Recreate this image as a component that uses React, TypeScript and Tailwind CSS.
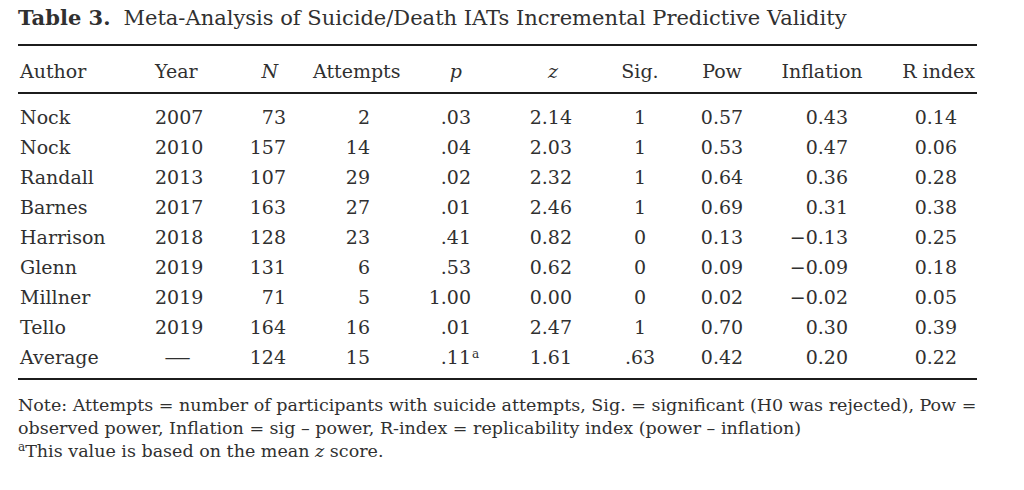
import React from "react";

const cols = "grid grid-cols-[132px_80px_70px_110px_90px_100px_80px_84px_116px_97px]";

const headCls = [
  "text-left pl-[2px]",
  "text-left pl-[5px]",
  "text-right pr-[22px] italic",
  "text-left pl-[13px]",
  "text-right pr-[38px] italic",
  "text-right pr-[42px] italic",
  "text-center",
  "text-center",
  "text-center",
  "text-right pr-[2px]",
];

const bodyCls = [
  "text-left pl-[2px]",
  "text-left pl-[5px]",
  "text-right pr-[14px]",
  "text-right pr-[40px]",
  "text-right pr-[29px]",
  "text-right pr-[28px]",
  "text-center",
  "text-center",
  "text-right pr-[32px]",
  "text-right pr-[20px]",
];

const headers = ["Author", "Year", "N", "Attempts", "p", "z", "Sig.", "Pow", "Inflation", "R index"];

const rows: string[][] = [
  ["Nock", "2007", "73", "2", ".03", "2.14", "1", "0.57", "0.43", "0.14"],
  ["Nock", "2010", "157", "14", ".04", "2.03", "1", "0.53", "0.47", "0.06"],
  ["Randall", "2013", "107", "29", ".02", "2.32", "1", "0.64", "0.36", "0.28"],
  ["Barnes", "2017", "163", "27", ".01", "2.46", "1", "0.69", "0.31", "0.38"],
  ["Harrison", "2018", "128", "23", ".41", "0.82", "0", "0.13", "\u22120.13", "0.25"],
  ["Glenn", "2019", "131", "6", ".53", "0.62", "0", "0.09", "\u22120.09", "0.18"],
  ["Millner", "2019", "71", "5", "1.00", "0.00", "0", "0.02", "\u22120.02", "0.05"],
  ["Tello", "2019", "164", "16", ".01", "2.47", "1", "0.70", "0.30", "0.39"],
  ["Average", "DASH", "124", "15", ".11SUP", "1.61", ".63", "0.42", "0.20", "0.22"],
];

function Cell({ v }: { v: string }) {
  if (v === "DASH") {
    return <span className="inline-block w-[44px] text-center"><span className="inline-block scale-x-[1.4]">—</span></span>;
  }
  if (v.endsWith("SUP")) {
    return (
      <span className="relative">
        {v.replace("SUP", "")}
        <span className="absolute left-[calc(100%+1px)] top-[2px] text-[12px] leading-none">a</span>
      </span>
    );
  }
  return <>{v}</>;
}

export default function App() {
  return (
    <div
      className="w-[1024px] h-[490px] bg-white text-[#303030] px-[18px] overflow-hidden"
      style={{ fontFamily: '"DejaVu Serif", "Liberation Serif", serif' }}
    >
      <div className="pt-[4px] text-[21px] leading-[28px] whitespace-nowrap">
        <span className="font-bold">Table 3.</span>
        <span className="ml-[13px]">Meta-Analysis of Suicide/Death IATs Incremental Predictive Validity</span>
      </div>
      <div className="w-[959px] mt-[12px] border-t-2 border-[#1c1c1c]" />
      <div className="w-[959px] text-[19px] leading-[30px]">
        <div className={`${cols} pt-[10px] pb-[6px] border-b-2 border-[#1c1c1c]`}>
          {headers.map((h, i) => (
            <div key={i} className={headCls[i]}>{h}</div>
          ))}
        </div>
        <div className="pt-[8px] pb-[6px] border-b-2 border-[#1c1c1c]">
          {rows.map((r, ri) => (
            <div key={ri} className={cols}>
              {r.map((v, ci) => (
                <div key={ci} className={bodyCls[ci]}>
                  <Cell v={v} />
                </div>
              ))}
            </div>
          ))}
        </div>
      </div>
      <div className="pt-[14px] text-[17.5px] leading-[23px] whitespace-nowrap">
        <div>Note: Attempts = number of participants with suicide attempts, Sig. = significant (H0 was rejected), Pow =</div>
        <div>observed power, Inflation = sig – power, R-index = replicability index (power – inflation)</div>
        <div>
          <sup className="text-[12px]">a</sup>This value is based on the mean <span className="italic">z</span> score.
        </div>
      </div>
    </div>
  );
}
